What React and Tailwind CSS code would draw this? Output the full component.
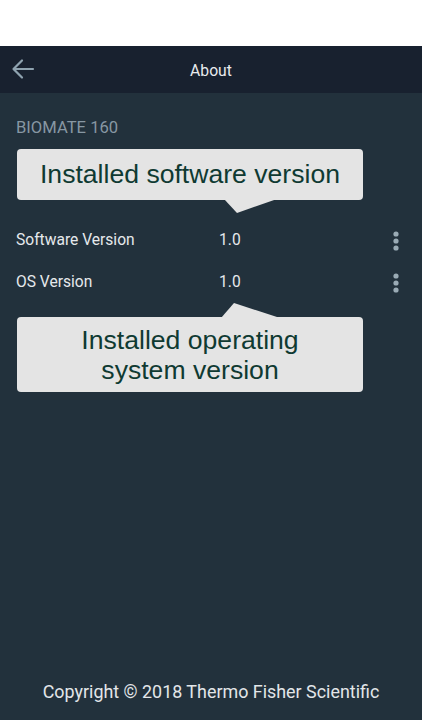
import React from "react";

const rows = [
  { label: "Software Version", value: "1.0" },
  { label: "OS Version", value: "1.0" },
];

const Dots = () => (
  <svg width="8" height="22" viewBox="0 0 8 22" className="text-[#9aabb5]">
    <circle cx="4" cy="4" r="2.6" fill="currentColor" />
    <circle cx="4" cy="11" r="2.6" fill="currentColor" />
    <circle cx="4" cy="18" r="2.6" fill="currentColor" />
  </svg>
);

export default function App() {
  return (
    <div className="relative w-[422px] h-[720px] bg-white font-['Roboto',sans-serif] overflow-hidden">
      <div className="h-[46px] bg-white" />

      {/* Top bar */}
      <div className="relative h-[47px] bg-[#18212f] flex items-center justify-center">
        <button className="absolute left-[11px] top-[12px] text-[#8fa3b0]">
          <svg width="24" height="22" viewBox="0 0 24 22" fill="none" stroke="currentColor" strokeWidth="2.2" strokeLinecap="round" strokeLinejoin="round">
            <path d="M22 11H3M11 2.5 2.5 11l8.5 8.5" />
          </svg>
        </button>
        <span className="pt-[3px] text-[15.7px] text-[#e8ebee]">About</span>
      </div>

      {/* Body */}
      <div className="h-[627px] bg-[#22313c] flex flex-col">
        <div className="px-4 pt-[25px] text-[16.6px] text-[#8797a3] leading-[20px]">BIOMATE 160</div>

        <div className="mt-[82px] flex flex-col">
          {rows.map((r) => (
            <div key={r.label} className="h-[42px] flex items-center pl-4 pr-[22px]">
              <span className="w-[203px] text-[15.6px] text-[#e6e9ec]">{r.label}</span>
              <span className="flex-1 text-[15.6px] text-[#e6e9ec]">{r.value}</span>
              <Dots />
            </div>
          ))}
        </div>

        <div className="mt-auto mb-[14px] text-center text-[17.9px] text-[#e3e6e9]">
          Copyright © 2018 Thermo Fisher Scientific
        </div>
      </div>

      {/* Callout: software version */}
      <div className="absolute left-[17px] top-[149px] w-[346px] h-[51px] rounded-[4px] bg-[#e4e4e4] flex items-center justify-center font-['Liberation_Sans',Arial,sans-serif] text-[26.6px] text-[#0f3a32]">
        Installed software version
      </div>
      <svg className="absolute left-0 top-0 pointer-events-none" width="422" height="720">
        <polygon points="224,199 237,213 277,199" fill="#e4e4e4" />
        <polygon points="221,318 234,303 277,317" fill="#e4e4e4" />
      </svg>

      {/* Callout: OS version */}
      <div className="absolute left-[17px] top-[317px] w-[346px] h-[75px] rounded-[4px] bg-[#e4e4e4] flex items-center justify-center text-center leading-[30px] font-['Liberation_Sans',Arial,sans-serif] text-[26.6px] text-[#0f3a32]">
        Installed operating
        <br />
        system version
      </div>
    </div>
  );
}
